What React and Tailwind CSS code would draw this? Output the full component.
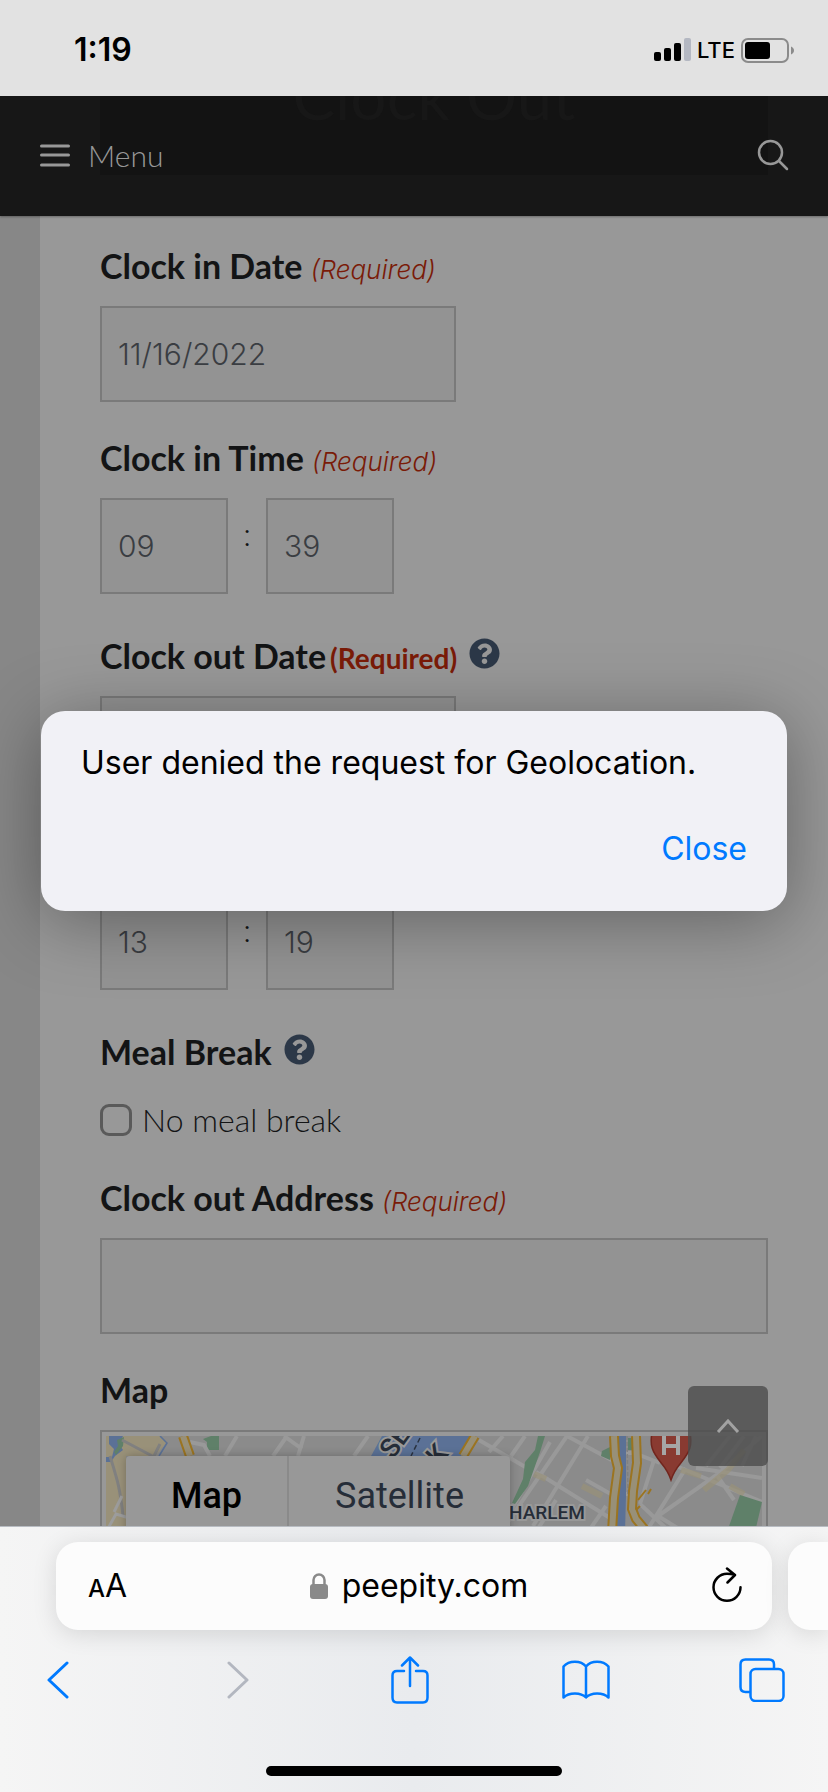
import React, { useState } from 'react';
import { FaQuestionCircle } from 'react-icons/fa';

const App = () => {
    const [dialogOpen, setDialogOpen] = useState(true);

    return (
        <div className="h-screen flex flex-col overflow-hidden bg-[#989898] font-['Lato',sans-serif]">
            <StatusBar />

            {/* Web page */}
            <div className="relative flex-1 min-h-0 flex flex-col overflow-hidden">
                <SiteHeader />
                <ClockOutForm />

                {/* Back to top */}
                <button aria-label="Back to top" className="absolute right-[60px] bottom-[60px] w-20 h-20 rounded-md bg-[#4c4c4c]/80 flex items-center justify-center">
                    <svg viewBox="0 0 24 14" className="w-6 h-3.5" fill="none" stroke="#a2a2a2" strokeWidth="3">
                        <path d="M2 13 12 2l10 11" />
                    </svg>
                </button>

                {dialogOpen && (
                    <div className="absolute inset-0 flex items-center px-[41px]">
                        <div role="alertdialog" aria-describedby="alert-text" className="w-full h-[200px] rounded-3xl bg-[#f1f1f6] shadow-[0_10px_70px_rgba(0,0,0,0.35)] px-10 pt-7 flex flex-col font-['Inter',sans-serif]">
                            <p id="alert-text" className="text-[32px] leading-12 text-black whitespace-nowrap">User denied the request for Geolocation.</p>
                            <button onClick={() => setDialogOpen(false)} className="self-end mt-[38px] text-[32px] leading-12 text-[#007aff]">Close</button>
                        </div>
                    </div>
                )}
            </div>

            <SafariBar />
        </div>
    );
};

const StatusBar = () => (
    <div className="h-24 shrink-0 bg-[#e2e2e2] flex items-center justify-between pl-[74px] pr-[34px] pt-1 font-['Inter',sans-serif] text-black">
        <span className="text-[32px] font-semibold">1:19</span>
        <div className="flex items-center gap-1.5">
            <svg viewBox="0 0 37 24" className="w-[37px] h-6">
                <rect x="0" y="14" width="7" height="9" rx="2" />
                <rect x="10" y="10" width="7" height="13" rx="2" />
                <rect x="20" y="5" width="7" height="18" rx="2" />
                <rect x="30" y="0" width="7" height="23" rx="2" fill="#b4b8c2" />
            </svg>
            <span className="text-[22px] font-medium">LTE</span>
            <svg viewBox="0 0 53 25" className="w-[53px] h-[25px]">
                <rect x="1" y="1" width="46" height="23" rx="6" fill="none" stroke="#8b8b8b" strokeWidth="2" />
                <rect x="4" y="4" width="25" height="17" rx="3" />
                <path d="M50 8.500c4 1.500 4 6.500 0 8z" fill="#8b8b8b" />
            </svg>
        </div>
    </div>
);

const SiteHeader = () => (
    <header className="relative h-[120px] shrink-0 bg-[#171717] overflow-hidden shadow-[0_1px_2px_rgba(0,0,0,0.3)]">
        {/* page title scrolled under the translucent bar */}
        <div className="absolute left-[100px] right-[60px] top-0 h-[79px] bg-[#131313] flex justify-center">
            <span className="text-[64px] leading-16 -mt-8 text-[#171717]">Clock Out</span>
        </div>
        <div className="relative h-full flex items-center justify-between pb-0.5 pl-10 pr-[39px] text-[#989898]">
            <button className="flex items-center gap-[18px]">
                <svg viewBox="0 0 30 24" className="w-[30px] h-6" stroke="currentColor" strokeWidth="3" strokeLinecap="round">
                    <path d="M1.500 3h27M1.500 12h27M1.500 22h27" />
                </svg>
                <span className="text-[30px] leading-10 font-light">Menu</span>
            </button>
            <button aria-label="Search">
                <svg viewBox="0 0 32 32" className="w-8 h-8" fill="none" stroke="currentColor" strokeWidth="2.500" strokeLinecap="round">
                    <circle cx="13.500" cy="13.500" r="11.500" />
                    <path d="m22 22 8 8" />
                </svg>
            </button>
        </div>
    </header>
);

const boxStyle = "h-24 border-2 border-[#7a7a7a] bg-[#939393] pl-4 font-['Inter',sans-serif] text-[30px] font-light text-[#3a3d42] rounded-none outline-none";

const ClockOutForm = () => (
    <main className="flex-1 border-l-[40px] border-[#878787] pl-[60px] pr-[60px] pt-[30px] flex flex-col gap-9">
        <div className="flex flex-col gap-5">
            <FieldLabel htmlFor="in-date" required>Clock in Date</FieldLabel>
            <input id="in-date" defaultValue="11/16/2022" className={`${boxStyle} w-[356px]`} />
        </div>
        <div className="flex flex-col gap-5">
            <FieldLabel htmlFor="in-hour" required>Clock in Time</FieldLabel>
            <TimeFields id="in" hour="09" minute="39" />
        </div>
        <div className="flex flex-col gap-5">
            <FieldLabel htmlFor="out-date" requiredBold help>Clock out Date</FieldLabel>
            <input id="out-date" defaultValue="11/16/2022" className={`${boxStyle} w-[356px]`} />
        </div>
        <div className="flex flex-col gap-5">
            <FieldLabel htmlFor="out-hour" requiredBold help>Clock out Time</FieldLabel>
            <TimeFields id="out" hour="13" minute="19" />
        </div>
        <div className="flex flex-col gap-[26px]">
            <FieldLabel htmlFor="no-meal" help>Meal Break</FieldLabel>
            <div className="h-11 flex items-center gap-2.5">
                <input id="no-meal" type="checkbox" className="appearance-none w-8 h-8 rounded-[9px] border-3 border-[#5a5a5a]" />
                <label htmlFor="no-meal" className="text-[32px] leading-10 font-light text-[#131415]">No meal break</label>
            </div>
        </div>
        <div className="flex flex-col gap-5">
            <FieldLabel htmlFor="address" required>Clock out Address</FieldLabel>
            <input id="address" className={`${boxStyle} w-full`} />
        </div>
        <div className="flex flex-col gap-5">
            <h3 className="text-[34px] leading-10 font-bold text-[#131415]">Map</h3>
            <div className="relative h-[400px] border-2 border-[#7a7a7a] p-1 overflow-hidden font-['Roboto',sans-serif]">
                <StreetMap />
                <div className="absolute left-6 top-6 h-20 flex rounded-sm bg-[#989898] shadow-[0_0_8px_rgba(0,0,0,0.25)] text-4xl">
                    <button className="w-[163px] font-medium text-black border-r-2 border-[#8a8a8a]">Map</button>
                    <button className="w-[221px] text-[#262d38]">Satellite</button>
                </div>
            </div>
        </div>
    </main>
);

const FieldLabel = ({ htmlFor, required, requiredBold, help, children }) => (
    <div className={help ? 'h-[46px] flex items-end' : 'h-10 flex items-end'}>
        <label htmlFor={htmlFor} className="text-[34px] leading-10 font-bold text-[#131415] whitespace-nowrap">
            {children}
            {required && <span className="ml-2 font-['Inter',sans-serif] text-[26px] leading-none font-light italic text-[#7a1b08]">(Required)</span>}
            {requiredBold && <span className="ml-1 text-[28px] leading-none text-[#7a1b08]">(Required)</span>}
        </label>
        {help && (
            <button aria-label="Help" className="ml-3 mb-[7px]">
                <FaQuestionCircle className="w-[31px] h-[31px] text-[#2c3848]" />
            </button>
        )}
    </div>
);

const TimeFields = ({ id, hour, minute }) => (
    <div className="flex">
        <input id={`${id}-hour`} defaultValue={hour} className={`${boxStyle} w-32`} />
        <span className="w-[38px] pt-3 text-center text-[32px] font-light text-[#131415]">:</span>
        <input aria-label="Minutes" defaultValue={minute} className={`${boxStyle} w-32`} />
    </div>
);

const StreetMap = () => (
    <svg viewBox="0 0 656 96" preserveAspectRatio="xMidYMin slice" className="w-full h-24 bg-[#8b8b8b]">
        {/* west side park */}
        <path d="M0 0h54l7 6-12 14H20v76H0z" fill="#999179" />
        <path d="M3 0h14l-4 8 4 6-8 6-4 6H0v-5h6l2-8-5-5z" fill="#5b7196" />
        <path d="M11 4l7-3-1 9-7 9-2-3 4-6z" fill="#5f8069" />
        <path d="M54 0l7 7-8 13" fill="none" stroke="#5b7196" strokeWidth="1.500" />
        <path d="M4 20c6 20 10 30 13 60M16 4l34 18M54 8l-6 12" fill="none" stroke="#808080" strokeWidth="3" />
        <path d="M0 96l10-18 20 6M8 76l8-16" fill="none" stroke="#9c9c9c" strokeWidth="3" />
        <path d="M97 3l8-3h8v14h-12v-8z" fill="#5f8069" />

        {/* river */}
        <path d="M276 0h90l-12 22h-90z" fill="#5b7196" />
        <path d="M314 2l-9 18" stroke="#2a3342" strokeWidth="1.500" strokeDasharray="5 3" />

        {/* streets */}
        <g fill="none" stroke="#999" strokeWidth="4">
            <path d="M84 6l14 3 6 11M131 0l-12 20M181 0l-14 20M178 0l18 13M198 0l-6 20M262 0l-14 20" />
            <path d="M373 4l48 28M397 0l-14 16M419 0l-14 20M461 0l-66 96M482 0l-55 90M461 0l50 27M480 44l30 17M430 36l74 46M404 76l40-70M450 64l-20 32M500 70l-18 26" />
            <path d="M514 17h14l26 10M514 58h14M548 24l-14 44M534 68l30 28M552 80l60-42 44-38M580 32l-40 64M570 30l86 36M590 32l66 10M600 30l24-30M614 32l24-32M636 30l14-30M552 80l26 16M610 38l18 26" />
        </g>
        <path d="M428 38l12 5M476 50l20 10M575 34l20 6M598 54l24-20 16-20M624 50l14 8" fill="none" stroke="#999179" strokeWidth="6" opacity="0.700" />

        {/* parks */}
        <path d="M432 0h7l-5 16-12 34-13 18-3-1 11-24 2-17 10-12z" fill="#5f8069" />
        <path d="M496 15l8-4v13l-9-4zM522 2h6v12h-6z" fill="#5f8069" />
        <path d="M634 59l22 7-7 30h-28z" fill="#5f8069" />

        {/* harlem river and the two drives */}
        <path d="M513 0h7v60l-1 36h-9z" fill="#5b7196" />
        <path d="M521 0l1 58" stroke="#808080" strokeWidth="1.500" strokeDasharray="4 2" />
        <g fill="none" stroke="#9b7420" strokeWidth="10">
            <path d="M77 0l7 20M369 0l-12 20" />
            <path d="M508 0l1 20 3 12-4 30-2 34M530 0l1 27-4 28-1 18 4 10 10 12" />
        </g>
        <g fill="none" stroke="#989078" strokeWidth="6">
            <path d="M77 0l7 20M369 0l-12 20" />
            <path d="M508 0l1 20 3 12-4 30-2 34M530 0l1 27-4 28-1 18 4 10 10 12" />
        </g>
        <path d="M532 64l8-10M534 70l-4 4M542 58l3-5" stroke="#9b7420" strokeWidth="2" />

        {/* place names */}
        <g fill="#262d38" stroke="#999" strokeWidth="4" paintOrder="stroke" fontFamily="Roboto" fontWeight="500">
            <text x="287" y="24" fontSize="27" transform="rotate(-54 287 24)">SE</text>
            <text x="332" y="31" fontSize="27" transform="rotate(-48 332 31)">K</text>
            <text x="403" y="83" fontSize="19">HARLEM</text>
        </g>

        {/* hospital pin */}
        <path d="M548-10c-7 20 0 28 8 38 5 6 7 10 9 16 2-6 4-10 9-16 8-10 15-18 8-38z" fill="#893a31" stroke="#71251d" strokeWidth="1.500" />
        <path d="M558 0v19M572 0v19M558 10h14" stroke="#a6a6a6" strokeWidth="4" />
    </svg>
);

const SafariBar = () => (
    <footer className="h-[266px] shrink-0 relative overflow-hidden border-t border-[#b8bcc2] bg-linear-to-r from-[#f5f5f5] via-[#e9ebee] to-[#f5f5f5] pt-[15px] font-['Inter',sans-serif]">
        <div className="flex gap-4 pl-14">
            <div className="flex-1 h-[88px] rounded-[22px] bg-[#fcfcfc] shadow-[0_4px_24px_rgba(0,0,0,0.12)] flex items-center justify-between pl-8 pr-7">
                <button aria-label="Page settings" className="text-black leading-10 w-10 pt-1 text-left whitespace-nowrap">
                    <span className="text-2xl font-medium">A</span><span className="text-[32px]">A</span>
                </button>
                <a href="#" className="flex items-center gap-3.5 text-[32px] text-black">
                    <svg viewBox="0 0 18 26" className="w-[18px] h-[26px]">
                        <path d="M3.500 12V7a5.500 5.500 0 0 1 11 0v5" fill="none" stroke="#8a8a8a" strokeWidth="2.500" />
                        <rect y="11" width="18" height="15" rx="3" fill="#8a8a8a" />
                    </svg>
                    peepity.com
                </a>
                <button aria-label="Reload">
                    <svg viewBox="0 0 34 38" className="w-[34px] h-[38px]" fill="none" stroke="#000" strokeWidth="2.500" strokeLinecap="round" strokeLinejoin="round">
                        <path d="M24 7.500Q21 6.800 17 6.800A13.500 13.500 0 1 0 30.500 20.300M17 1.500l8 6.500-7.500 7.500" />
                    </svg>
                </button>
            </div>
            <div className="w-10 h-[88px] rounded-l-[22px] bg-[#fcfcfc] shadow-[0_4px_24px_rgba(0,0,0,0.12)]" />
        </div>

        <nav className="mt-[25px] h-[50px] pl-[34px] pr-[42px] flex items-center justify-between text-[#007aff]">
            <NavButton label="Back">
                <svg viewBox="0 0 22 38" className="w-[22px] h-[38px]" fill="none" stroke="currentColor" strokeWidth="3" strokeLinecap="round" strokeLinejoin="round">
                    <path d="M20 2 2 19l18 17" />
                </svg>
            </NavButton>
            <NavButton label="Forward">
                <svg viewBox="-8 0 30 38" className="w-[30px] h-[38px] text-[#b3b7c0]" fill="none" stroke="currentColor" strokeWidth="3" strokeLinecap="round" strokeLinejoin="round">
                    <path d="m2 2 18 17L2 36" />
                </svg>
            </NavButton>
            <NavButton label="Share">
                <svg viewBox="0 0 38 48" className="w-[38px] h-12" fill="none" stroke="currentColor" strokeWidth="2.500" strokeLinecap="round" strokeLinejoin="round">
                    <path d="M13 15H6q-4.500 0-4.500 4.500v22Q1.500 46.500 6 46.500h26q4.500 0 4.500-5v-22Q36.500 15 32 15h-7M19 30V2M11 9.500l8-8 8 8" />
                </svg>
            </NavButton>
            <NavButton label="Bookmarks">
                <svg viewBox="0 0 48 40" className="w-12 h-10" fill="none" stroke="currentColor" strokeWidth="2.500" strokeLinejoin="round">
                    <path d="M24 6.500C19 0 7 0 1.500 6.500v31C7 32 19 32 24 37.500 29 32 41 32 46.500 37.500v-31C41 0 29 0 24 6.500zM24 6.500v31" />
                </svg>
            </NavButton>
            <NavButton label="Tabs">
                <svg viewBox="0 0 46 44" className="w-[46px] h-11" fill="none" stroke="currentColor" strokeWidth="2.500">
                    <path d="M11 34H6.500q-5 0-5-5V6.500q0-5 5-5H30q5 0 5 5V11" />
                    <rect x="11.500" y="11" width="33" height="32" rx="5" />
                </svg>
            </NavButton>
        </nav>

        {/* Home indicator */}
        <div className="mx-auto mt-[61px] w-[296px] h-2.5 rounded-full bg-black" />
    </footer>
);

const NavButton = ({ label, children }) => (
    <button aria-label={label} className="w-12 flex justify-center">
        {children}
    </button>
);

export default App;
